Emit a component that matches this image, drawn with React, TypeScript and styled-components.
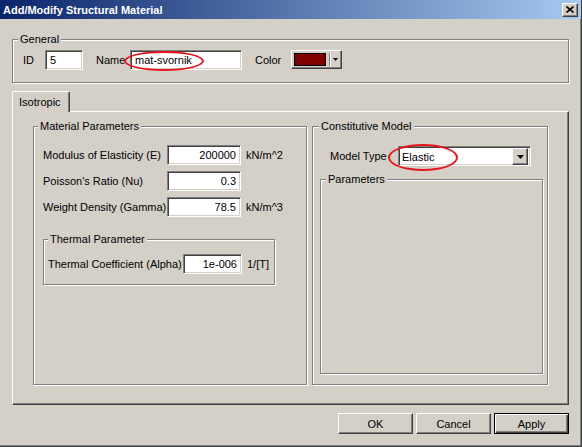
import React from 'react';
import styled, { createGlobalStyle, css } from 'styled-components';

const GlobalStyle = createGlobalStyle`
  html, body {
    margin: 0;
    padding: 0;
    background: #d4d0c8;
  }
  body {
    font-family: "Liberation Sans", Arial, sans-serif;
    font-size: 11px;
    color: #000;
  }
  * {
    box-sizing: border-box;
  }
`;

// classic 3d edges
const raised = css`
  background: #d4d0c8;
  border: 1px solid;
  border-color: #fff #404040 #404040 #fff;
  box-shadow: inset -1px -1px #808080;
`;

const sunken = css`
  background: #fff;
  border: 1px solid;
  border-color: #808080 #fff #fff #808080;
  box-shadow: inset 1px 1px #404040, inset -1px -1px #d4d0c8;
`;

const Window = styled.div`
  width: 582px;
  height: 447px;
  display: flex;
  flex-direction: column;
  background: #d4d0c8;
  border-right: 1px solid #404040;
  border-bottom: 1px solid #404040;
  box-shadow: inset -1px -1px #808080;
`;

const TitleBar = styled.div`
  flex: none;
  height: 19px;
  display: flex;
  align-items: center;
  justify-content: space-between;
  padding: 0 3px 0 3px;
  background: linear-gradient(to right, #0a246a, #a6caf0);
  color: #fff;
  font-weight: bold;
  font-size: 11px;
`;

const CloseButton = styled.div`
  ${raised};
  width: 16px;
  height: 14px;
  display: flex;
  align-items: center;
  justify-content: center;
`;

const Body = styled.div`
  flex: 1;
  display: flex;
  flex-direction: column;
  padding: 20px 12px 0 12px;
`;

const GroupBox = styled.div<{ $w?: number; $h?: number }>`
  position: relative;
  flex: none;
  ${p => (p.$w ? `width: ${p.$w}px;` : '')}
  ${p => (p.$h ? `height: ${p.$h}px;` : '')}
  border: 1px solid #808080;
  box-shadow: inset 1px 1px #fff, 1px 1px #fff;
`;

const Caption = styled.span<{ $left: number }>`
  position: absolute;
  top: -7px;
  left: ${p => p.$left}px;
  padding: 0 2px;
  line-height: 13px;
  background: #d4d0c8;
  white-space: nowrap;
`;

const GeneralRow = styled.div`
  display: flex;
  align-items: flex-start;
  padding: 10px 0 0 10px;
`;

const Label = styled.span<{ $w: number; $ml?: number }>`
  flex: none;
  width: ${p => p.$w}px;
  margin-left: ${p => p.$ml ?? 0}px;
  line-height: 20px;
  white-space: nowrap;
`;

const Unit = styled.span`
  margin-left: 5px;
  line-height: 20px;
  white-space: nowrap;
`;

const Field = styled.div`
  position: relative;
  flex: none;
`;

const TextBox = styled.input<{ $w: number; $right?: boolean }>`
  ${sunken};
  display: block;
  width: ${p => p.$w}px;
  height: 20px;
  padding: 0 4px;
  font: inherit;
  color: #000;
  outline: none;
  text-align: ${p => (p.$right ? 'right' : 'left')};
`;

const Mark = styled.div<{ $l: number; $t: number; $w: number; $h: number }>`
  position: absolute;
  left: ${p => p.$l}px;
  top: ${p => p.$t}px;
  width: ${p => p.$w}px;
  height: ${p => p.$h}px;
  border: 2px solid #e8141c;
  border-radius: 50%;
  pointer-events: none;
`;

const ColorButton = styled.div`
  ${raised};
  flex: none;
  width: 51px;
  height: 19px;
  display: flex;
  align-items: center;
  padding-left: 2px;
`;

const Swatch = styled.div<{ $color: string }>`
  width: 32px;
  height: 13px;
  border: 1px solid #000;
  background: ${p => p.$color};
`;

const Divider = styled.div`
  width: 2px;
  height: 13px;
  margin-left: 3px;
  border-left: 1px solid #808080;
  border-right: 1px solid #fff;
`;

const TabStrip = styled.div`
  display: flex;
  margin-top: 8px;
`;

const Tab = styled.div`
  position: relative;
  z-index: 1;
  width: 58px;
  height: 21px;
  margin-bottom: -1px;
  padding-left: 6px;
  line-height: 20px;
  background: #d4d0c8;
  border: 1px solid;
  border-bottom: none;
  border-color: #fff #404040 #d4d0c8 #fff;
  border-radius: 2px 2px 0 0;
  box-shadow: inset -1px 0 #808080;
`;

const TabPanel = styled.div`
  height: 294px;
  display: flex;
  gap: 5px;
  padding: 14px 20px 19px 20px;
  border: 1px solid;
  border-color: #fff #404040 #404040 #fff;
  box-shadow: inset -1px -1px #808080;
`;

const ParamList = styled.div`
  display: flex;
  flex-direction: column;
  gap: 6px;
  padding: 18px 0 0 9px;
`;

const Row = styled.div<{ $ml?: number }>`
  display: flex;
  align-items: center;
  margin-left: ${p => p.$ml ?? 0}px;
`;

const ThermalBox = styled(GroupBox)`
  margin-top: 16px;
  padding: 14px 0 0 4px;
`;

const ModelBox = styled(GroupBox)`
  display: flex;
  flex-direction: column;
  padding-top: 19px;
`;

const ParamsBox = styled(GroupBox)`
  flex: 1;
  margin: 13px 4px 10px 7px;
`;

const Combo = styled.div`
  ${sunken};
  position: relative;
  width: 133px;
  height: 20px;
  display: flex;
  align-items: center;
  justify-content: space-between;
  padding: 2px 2px 1px 3px;
`;

const ComboArrow = styled.div`
  ${raised};
  width: 16px;
  height: 17px;
  display: flex;
  align-items: center;
  justify-content: center;
`;

const ButtonBar = styled.div`
  display: flex;
  justify-content: flex-end;
  gap: 3px;
  margin-top: 8px;
`;

const Button = styled.div<{ $default?: boolean }>`
  width: 75px;
  height: 21px;
  display: flex;
  align-items: center;
  justify-content: center;
  background: #d4d0c8;
  ${p =>
    p.$default
      ? css`
          border: 1px solid #000;
          box-shadow: inset 1px 1px #fff, inset -1px -1px #404040, inset -2px -2px #808080;
        `
      : css`
          border: 1px solid;
          border-color: #fff #404040 #404040 #fff;
          box-shadow: inset -1px -1px #808080;
        `}
`;

const DownArrow = ({ w = 7 }: { w?: number }) => (
  <svg width={w} height={Math.ceil(w / 2)} viewBox={`0 0 ${w} ${Math.ceil(w / 2)}`}>
    <path d={`M0 0H${w}L${w / 2} ${Math.ceil(w / 2)}Z`} fill="#000" />
  </svg>
);

const params = [
  { label: 'Modulus of Elasticity (E)', value: '200000', unit: 'kN/m^2' },
  { label: "Poisson's Ratio (Nu)", value: '0.3', unit: '' },
  { label: 'Weight Density (Gamma)', value: '78.5', unit: 'kN/m^3' },
];

export default function App() {
  return (
    <>
      <GlobalStyle />
      <Window>
        <TitleBar>
          <span>Add/Modify Structural Material</span>
          <CloseButton>
            <svg width="8" height="7" viewBox="0 0 8 7">
              <path d="M0.5 0.5L7.5 6.5M7.5 0.5L0.5 6.5" stroke="#000" strokeWidth="1.6" />
            </svg>
          </CloseButton>
        </TitleBar>

        <Body>
          <GroupBox $h={44}>
            <Caption $left={5}>General</Caption>
            <GeneralRow>
              <Label $w={22}>ID</Label>
              <TextBox $w={38} defaultValue="5" readOnly />
              <Label $w={34} $ml={13}>Name</Label>
              <Field>
                <TextBox $w={112} defaultValue="mat-svornik" readOnly />
                <Mark $l={-6} $t={1} $w={80} $h={20} />
              </Field>
              <Label $w={36} $ml={13}>Color</Label>
              <ColorButton>
                <Swatch $color="#800000" />
                <Divider />
                <span style={{ marginLeft: 2, display: 'flex' }}>
                  <DownArrow w={5} />
                </span>
              </ColorButton>
            </GeneralRow>
          </GroupBox>

          <TabStrip>
            <Tab>Isotropic</Tab>
          </TabStrip>
          <TabPanel>
            <GroupBox $w={274}>
              <Caption $left={4}>Material Parameters</Caption>
              <ParamList>
                {params.map(p => (
                  <Row key={p.label}>
                    <Label $w={124}>{p.label}</Label>
                    <TextBox $w={74} $right defaultValue={p.value} readOnly />
                    {p.unit && <Unit>{p.unit}</Unit>}
                  </Row>
                ))}
                <ThermalBox $w={232} $h={46}>
                  <Caption $left={4}>Thermal Parameter</Caption>
                  <Row>
                    <Label $w={135}>Thermal Coefficient (Alpha)</Label>
                    <TextBox $w={59} $right defaultValue="1e-006" readOnly />
                    <Unit>1/[T]</Unit>
                  </Row>
                </ThermalBox>
              </ParamList>
            </GroupBox>

            <ModelBox $w={236}>
              <Caption $left={6}>Constitutive Model</Caption>
              <Row $ml={17}>
                <Label $w={68}>Model Type</Label>
                <Combo>
                  <span>Elastic</span>
                  <ComboArrow>
                    <DownArrow w={7} />
                  </ComboArrow>
                  <Mark $l={-11} $t={-3} $w={70} $h={27} />
                </Combo>
              </Row>
              <ParamsBox>
                <Caption $left={5}>Parameters</Caption>
              </ParamsBox>
            </ModelBox>
          </TabPanel>

          <ButtonBar>
            <Button>OK</Button>
            <Button>Cancel</Button>
            <Button $default>Apply</Button>
          </ButtonBar>
        </Body>
      </Window>
    </>
  );
}
